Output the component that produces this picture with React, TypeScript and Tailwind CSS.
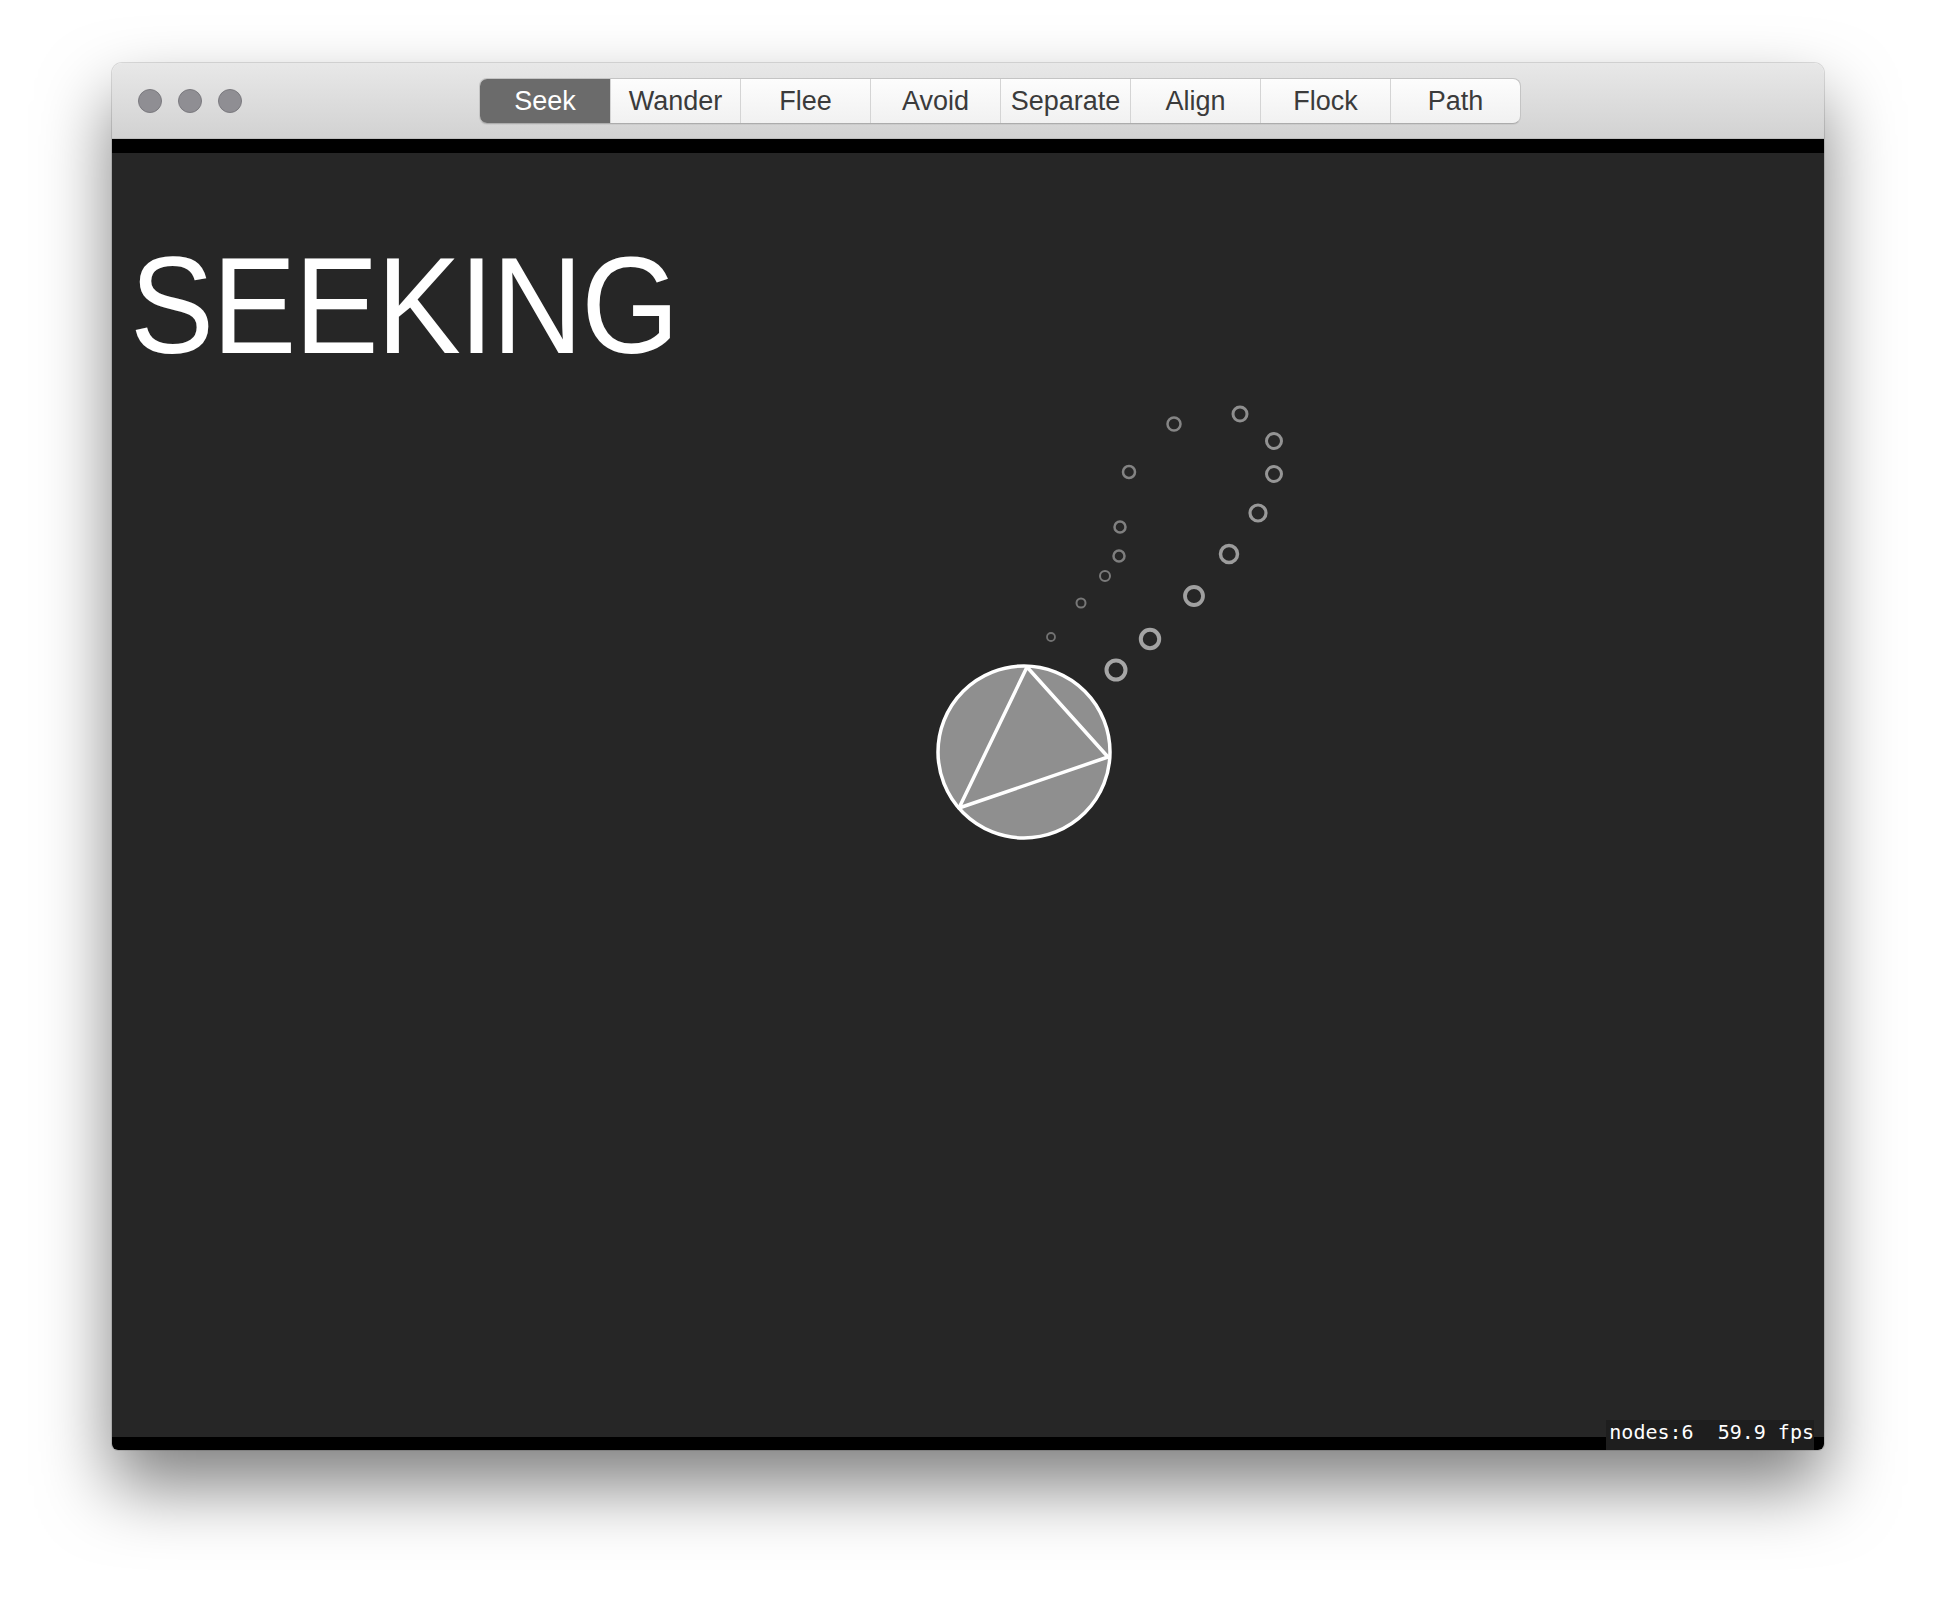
import React from "react";

const tabs = ["Seek", "Wander", "Flee", "Avoid", "Separate", "Align", "Flock", "Path"];

// trail markers, in canvas coordinates (canvas origin = window left, content top)
const trail = [
    // fading trail
    { x: 1174, y: 424, r: 6.5, sw: 2.5, c: "#858585" },
    { x: 1129, y: 472, r: 6, sw: 2.5, c: "#838383" },
    { x: 1120, y: 527, r: 5.5, sw: 2.5, c: "#808080" },
    { x: 1119, y: 556, r: 5.5, sw: 2.5, c: "#7e7e7e" },
    { x: 1105, y: 576, r: 5, sw: 2, c: "#7a7a7a" },
    { x: 1081, y: 603, r: 4.5, sw: 2, c: "#777777" },
    { x: 1051, y: 637, r: 4, sw: 1.8, c: "#727272" },
    // target trail
    { x: 1240, y: 414, r: 7, sw: 3, c: "#8f8f8f" },
    { x: 1274, y: 441, r: 7.5, sw: 3, c: "#939393" },
    { x: 1274, y: 474, r: 7.5, sw: 3, c: "#969696" },
    { x: 1258, y: 513, r: 8, sw: 3.2, c: "#999999" },
    { x: 1229, y: 554, r: 8.5, sw: 3.5, c: "#9c9c9c" },
    { x: 1194, y: 596, r: 9, sw: 3.8, c: "#a0a0a0" },
    { x: 1150, y: 639, r: 9.2, sw: 4, c: "#a3a3a3" },
    { x: 1116, y: 670, r: 9.5, sw: 4, c: "#a6a6a6" },
];

function TrafficLights() {
    return (
        <div className="flex gap-[16px]">
            {[0, 1, 2].map((i) => (
                <span
                    key={i}
                    className="block w-[24px] h-[24px] rounded-full bg-[#8f8e93] border border-[#7b7a7f]"
                />
            ))}
        </div>
    );
}

export default function App() {
    const ox = 112;
    const oy = 153;

    return (
        <div className="w-[1936px] h-[1610px] bg-white pt-[63px] pl-[112px]">
            {/* Window */}
            <div className="w-[1712px] h-[1387px] flex flex-col rounded-t-[10px] rounded-b-[6px] overflow-hidden shadow-[0_36px_70px_rgba(0,0,0,0.5),0_0_0_1px_rgba(0,0,0,0.12)]">
                {/* Title bar */}
                <div className="h-[76px] shrink-0 flex items-center pl-[26px] bg-gradient-to-b from-[#e8e8e8] to-[#d2d2d2] border-b border-[#bdbdbd]">
                    <TrafficLights />
                    <div
                        className="ml-[237px] mt-[1px] flex h-[46px] rounded-[8px] border border-[#c4c4c4] border-b-[#acacac] overflow-hidden bg-gradient-to-b from-[#fdfdfd] to-[#f1f1f1] shadow-[0_1px_0_rgba(0,0,0,0.05)]"
                        style={{ fontFamily: '"Liberation Sans", Arial, sans-serif' }}
                    >
                        {tabs.map((label, i) => (
                            <div
                                key={label}
                                className={
                                    i === 0
                                        ? "w-[130px] flex items-center justify-center text-[27px] text-white bg-[#6b6b6b]"
                                        : "w-[130px] flex items-center justify-center text-[27px] text-[#3b3b3b] border-l border-[#d4d4d4]"
                                }
                            >
                                {label}
                            </div>
                        ))}
                    </div>
                </div>

                {/* Top black strip */}
                <div className="h-[14px] shrink-0 bg-black" />

                {/* Scene */}
                <div className="relative flex-1 flex flex-col">
                    <div className="relative flex-1 bg-[#262626]">
                        <svg
                            className="absolute inset-0"
                            width="1712"
                            height="1284"
                            viewBox="0 0 1712 1284"
                        >
                            {trail.map((p, i) => (
                                <circle
                                    key={i}
                                    cx={p.x - ox}
                                    cy={p.y - oy}
                                    r={p.r}
                                    fill="none"
                                    stroke={p.c}
                                    strokeWidth={p.sw}
                                />
                            ))}
                            <circle
                                cx={1024 - ox}
                                cy={752 - oy}
                                r={86}
                                fill="#8f8f8f"
                                stroke="#ffffff"
                                strokeWidth={3.5}
                            />
                            <polygon
                                points={`${1027 - ox},${667 - oy} ${1108 - ox},${757 - oy} ${959 - ox},${808 - oy}`}
                                fill="none"
                                stroke="#ffffff"
                                strokeWidth={3.5}
                                strokeLinejoin="round"
                            />
                        </svg>
                        <div className="relative pt-[84px] pl-[18px]">
                            <span
                                className="inline-block origin-left scale-x-[0.92] text-[137px] leading-none text-white tracking-[-2px]"
                                style={{ fontFamily: '"Liberation Sans", Arial, sans-serif' }}
                            >
                                SEEKING
                            </span>
                        </div>
                    </div>

                    {/* Bottom black strip */}
                    <div className="h-[13px] shrink-0 bg-black" />

                    {/* Stats overlay */}
                    <div
                        className="absolute right-[10px] bottom-0 h-[30px] pl-[3px] bg-[#1e1e1e] text-white text-[20px] leading-[24px] whitespace-pre"
                        style={{ fontFamily: '"DejaVu Sans Mono", monospace' }}
                    >
                        nodes:6  59.9 fps
                    </div>
                </div>
            </div>
        </div>
    );
}
